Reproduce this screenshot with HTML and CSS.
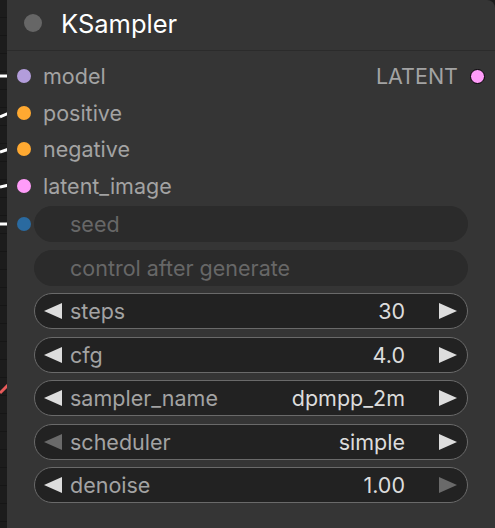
FILE: index.html
```html
<!DOCTYPE html>
<html>
<head>
<meta charset="utf-8">
<link rel="stylesheet" href="styles.css">
</head>
<body>
<div class="canvas">
  <svg class="wires" width="12" height="528" viewBox="0 0 12 528">
    <line x1="0" y1="76" x2="9" y2="76" stroke="#fff" stroke-width="3"/>
    <line x1="0" y1="117" x2="9" y2="113" stroke="#fff" stroke-width="3"/>
    <line x1="0" y1="152" x2="9" y2="149" stroke="#fff" stroke-width="3"/>
    <line x1="0" y1="187" x2="9" y2="185" stroke="#fff" stroke-width="3"/>
    <line x1="0" y1="224" x2="9" y2="224" stroke="#fff" stroke-width="3"/>
    <line x1="0" y1="393" x2="9" y2="384" stroke="#e85a5a" stroke-width="3"/>
  </svg>
  <div class="node">
    <div class="title">
      <span class="title-dot"></span>
      <span class="title-text">KSampler</span>
    </div>
    <div class="slots">
      <div class="inputs">
        <div class="slot"><span class="dot model"></span><span class="slot-label">model</span></div>
        <div class="slot"><span class="dot cond"></span><span class="slot-label">positive</span></div>
        <div class="slot"><span class="dot cond"></span><span class="slot-label">negative</span></div>
        <div class="slot"><span class="dot latent"></span><span class="slot-label">latent_image</span></div>
      </div>
      <div class="outputs">
        <div class="slot out"><span class="slot-label">LATENT</span><span class="dot latent outline"></span></div>
      </div>
    </div>
    <div class="widgets">
      <div class="wrow">
        <span class="dot int"></span>
        <div class="widget disabled"><span class="wlabel">seed</span></div>
      </div>
      <div class="wrow plain">
        <div class="widget disabled"><span class="wlabel">control after generate</span></div>
      </div>
      <div class="wrow plain">
        <div class="widget">
          <svg class="arrow" viewBox="0 0 18 16"><polygon points="18,0 18,16 0,8"/></svg>
          <span class="wlabel">steps</span><span class="wvalue">30</span>
          <svg class="arrow" viewBox="0 0 18 16"><polygon points="0,0 0,16 18,8"/></svg>
        </div>
      </div>
      <div class="wrow plain">
        <div class="widget">
          <svg class="arrow" viewBox="0 0 18 16"><polygon points="18,0 18,16 0,8"/></svg>
          <span class="wlabel">cfg</span><span class="wvalue">4.0</span>
          <svg class="arrow" viewBox="0 0 18 16"><polygon points="0,0 0,16 18,8"/></svg>
        </div>
      </div>
      <div class="wrow plain">
        <div class="widget">
          <svg class="arrow" viewBox="0 0 18 16"><polygon points="18,0 18,16 0,8"/></svg>
          <span class="wlabel">sampler_name</span><span class="wvalue">dpmpp_2m</span>
          <svg class="arrow" viewBox="0 0 18 16"><polygon points="0,0 0,16 18,8"/></svg>
        </div>
      </div>
      <div class="wrow plain">
        <div class="widget">
          <svg class="arrow dim" viewBox="0 0 18 16"><polygon points="18,0 18,16 0,8"/></svg>
          <span class="wlabel">scheduler</span><span class="wvalue">simple</span>
          <svg class="arrow" viewBox="0 0 18 16"><polygon points="0,0 0,16 18,8"/></svg>
        </div>
      </div>
      <div class="wrow plain">
        <div class="widget">
          <svg class="arrow" viewBox="0 0 18 16"><polygon points="18,0 18,16 0,8"/></svg>
          <span class="wlabel">denoise</span><span class="wvalue">1.00</span>
          <svg class="arrow dim" viewBox="0 0 18 16"><polygon points="0,0 0,16 18,8"/></svg>
        </div>
      </div>
    </div>
  </div>
</div>
</body>
</html>
```

FILE: styles.css
```css
* { box-sizing: border-box; }
html, body {
  margin: 0;
  padding: 0;
  width: 495px;
  height: 528px;
  overflow: hidden;
  background: #1c1c1c;
  font-family: Inter, "Noto Sans", sans-serif;
}
.canvas {
  position: relative;
  width: 495px;
  height: 528px;
  background: repeating-linear-gradient(to bottom, #1c1c1c 0, #1c1c1c 17px, #161616 17px, #161616 18px);
}
.wires {
  position: absolute;
  left: 0;
  top: 0;
}
.node {
  position: relative;
  margin-left: 7px;
  width: 488px;
  height: 528px;
  background: #353535;
  border-top-right-radius: 8px;
}
.title {
  height: 51px;
  display: flex;
  align-items: center;
  padding-left: 17px;
  gap: 19px;
  border-bottom: 1px solid #2b2b2b;
  padding-bottom: 3px;
}
.title-dot {
  width: 18px;
  height: 18px;
  border-radius: 50%;
  background: #666;
  margin-bottom: 1px;
}
.title-text {
  color: #fff;
  font-size: 25.5px;
}
.slots {
  display: flex;
  justify-content: space-between;
  padding-top: 7px;
}
.slot {
  height: 36.5px;
  display: flex;
  align-items: center;
  padding-left: 10px;
  gap: 12px;
}
.slot.out {
  padding-left: 0;
  padding-right: 10px;
  gap: 12px;
}
.slot-label {
  color: #a3a3a3;
  font-size: 21.5px;
}
.dot {
  width: 14px;
  height: 14px;
  border-radius: 50%;
  flex: none;
}
.dot.model { background: #b39ddb; }
.dot.cond { background: #ffa931; }
.dot.latent { background: #ff9cf9; }
.dot.int { background: #2a6aa0; }
.dot.outline { border: 1.5px solid #000; width: 15px; height: 15px; }
.widgets {
  display: flex;
  flex-direction: column;
  gap: 7.5px;
  padding-top: 2px;
  padding-right: 27px;
}
.wrow {
  display: flex;
  align-items: center;
  padding-left: 10px;
  gap: 3px;
}
.wrow.plain {
  padding-left: 27px;
}
.widget {
  flex: 1;
  height: 36px;
  border-radius: 18px;
  background: #222;
  border: 1.5px solid #6a6a6a;
  display: flex;
  align-items: center;
  padding: 0 10px 0 9px;
  font-size: 21.5px;
}
.widget.disabled {
  background: #2b2b2b;
  border-color: #2b2b2b;
  padding-left: 27px;
}
.widget.disabled .wlabel {
  color: #676767;
}
.wlabel {
  color: #a3a3a3;
  margin-left: 8px;
}
.wvalue {
  margin-left: auto;
  margin-right: 34px;
  color: #dcdcdc;
}
.arrow {
  width: 18px;
  height: 16px;
  fill: #dddddd;
  flex: none;
}
.arrow.dim {
  fill: #6a6a6a;
}
```
